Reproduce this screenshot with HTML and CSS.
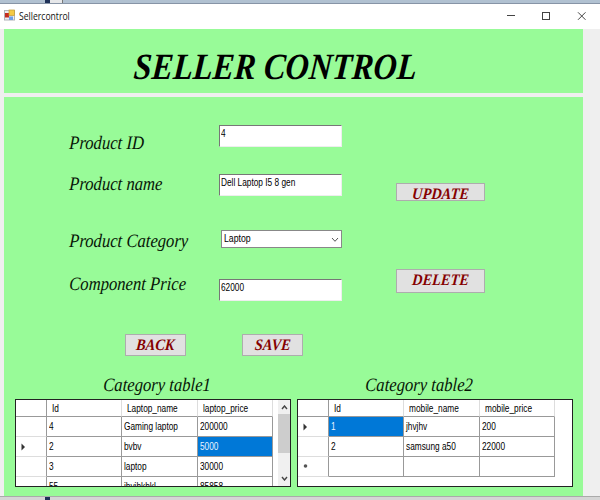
FILE: index.html
```
<!DOCTYPE html>
<html lang="en">
<head>
<meta charset="utf-8">
<title>Sellercontrol</title>
<link rel="stylesheet" href="styles.css">
</head>
<body>
<div class="backdrop-top"><i class="dark"></i><i class="light"></i></div>
<div class="window">
  <header class="titlebar">
    <svg class="app-icon" width="11" height="12" viewBox="0 0 11 12"><rect x=".5" y="1.5" width="10" height="9.5" fill="#ececf0" stroke="#b0b2b8"/><rect x="1" y="4" width="4" height="4.5" fill="#c42c20"/><rect x="5" y="1" width="5.5" height="5.5" fill="#f5c945" stroke="#c29a35" stroke-width=".7"/><rect x="5" y="7.5" width="4" height="3.5" fill="#6f9fe8"/></svg>
    <span class="caption">Sellercontrol</span>
    <svg class="controls" width="80" height="12" viewBox="0 0 80 12" fill="none" stroke="#444"><path d="M1 5.500h8"/><rect x="36.500" y="2.500" width="7" height="7"/><path d="M72 2.300l7.500 7.500M79.500 2.300l-7.500 7.500"/></svg>
  </header>
  <section class="banner"><h1>SELLER CONTROL</h1></section>
  <main class="panel">
    <div class="form">
      <div class="labels">
        <label class="lbl id">Product ID</label>
        <label class="lbl name">Product name</label>
        <label class="lbl cat">Product Category</label>
        <label class="lbl price">Component Price</label>
      </div>
      <div class="fields">
        <div class="box"><span class="s">4</span></div>
        <div class="box second"><span class="s">Dell Laptop I5 8 gen</span></div>
        <div class="combo"><span class="s">Laptop</span><svg width="8" height="6" viewBox="0 0 8 6" fill="none" stroke="#555"><path d="M1 1l3 3.300 3-3.300"/></svg></div>
        <div class="box fourth"><span class="s">62000</span></div>
      </div>
      <div class="side">
        <button class="btn update"><span>UPDATE</span></button>
        <button class="btn delete"><span>DELETE</span></button>
      </div>
    </div>
    <div class="actions">
      <button class="btn small"><span>BACK</span></button>
      <button class="btn small"><span>SAVE</span></button>
    </div>
    <div class="tables">
      <section class="block">
        <h2 class="lbl first-title">Category table1</h2>
        <div class="frame">
          <div class="grid">
            <div class="h"></div><div class="h"><span class="s">Id</span></div><div class="h"><span class="s">Laptop_name</span></div><div class="h"><span class="s">laptop_price</span></div>
            <div class="r"></div><div><span class="s">4</span></div><div><span class="s">Gaming laptop</span></div><div><span class="s">200000</span></div>
            <div class="r"><svg width="5" height="8" viewBox="0 0 5 8"><path d="M.5.500L4 4 .5 7.500z" fill="#333"/></svg></div><div><span class="s">2</span></div><div><span class="s">bvbv</span></div><div class="sel"><span class="s">5000</span></div>
            <div class="r"></div><div><span class="s">3</span></div><div><span class="s">laptop</span></div><div><span class="s">30000</span></div>
            <div class="r"></div><div><span class="s">55</span></div><div><span class="s">jhvjhkhkl</span></div><div><span class="s">85858</span></div>
          </div>
          <div class="scroll">
            <svg width="7" height="5" viewBox="0 0 7 5" fill="none" stroke="#444" stroke-width="1.400"><path d="M1 4l2.500-3L6 4"/></svg>
            <div class="thumb"></div>
            <svg class="down" width="7" height="5" viewBox="0 0 7 5" fill="none" stroke="#444" stroke-width="1.400"><path d="M1 1l2.500 3L6 1"/></svg>
          </div>
        </div>
      </section>
      <section class="block">
        <h2 class="lbl second-title">Category table2</h2>
        <div class="frame">
          <div class="grid">
            <div class="h"></div><div class="h"><span class="s">Id</span></div><div class="h"><span class="s">mobile_name</span></div><div class="h"><span class="s">mobile_price</span></div>
            <div class="r"><svg width="5" height="8" viewBox="0 0 5 8"><path d="M.5.500L4 4 .5 7.500z" fill="#333"/></svg></div><div class="sel"><span class="s">1</span></div><div><span class="s">jhvjhv</span></div><div><span class="s">200</span></div>
            <div class="r"></div><div><span class="s">2</span></div><div><span class="s">samsung a50</span></div><div><span class="s">22000</span></div>
            <div class="r"><svg class="new" width="5" height="6" viewBox="0 0 5 6"><circle cx="2.500" cy="3" r="1.800" fill="#555"/></svg></div><div></div><div></div><div></div>
          </div>
        </div>
      </section>
    </div>
  </main>
</div>
<div class="backdrop-bottom"><i></i></div>
</body>
</html>
```
FILE: styles.css
```
* { box-sizing: border-box; }
body {
  margin: 0;
  width: 600px;
  height: 500px;
  overflow: hidden;
  background: #efefef;
  font-family: "Liberation Sans", sans-serif;
}
.backdrop-top {
  display: flex;
  height: 4px;
  padding-left: 45px;
  background: #b1c1d1;
  border-bottom: 1px solid #8794a6;
}
.backdrop-top .dark { width: 5px; background: #1f3158; }
.backdrop-top .light { width: 13px; background: #e6e7e9; border-right: 1px solid #777; }
.window { height: 492px; }
.titlebar {
  display: flex;
  height: 25px;
  padding: 5px 14px 0 4px;
  background: #fff;
}
.caption {
  margin-left: 4px;
  font: 10.5px/14px "Open Sans", sans-serif;
  color: #111;
  white-space: nowrap;
  transform: scaleX(.82);
  transform-origin: 0 0;
}
.controls { margin: 1px 0 0 auto; }
.app-icon { flex: none; }
.banner {
  width: 579px;
  height: 64px;
  margin: 0 0 4px 4px;
  padding: 17px 0 0 129px;
  background: #98fb98;
}
h1 {
  margin: 0;
  font: italic bold 37px/41px "Liberation Serif", serif;
  white-space: nowrap;
  transform: scaleX(.874) skewX(-5deg);
  transform-origin: 0 80%;
}
.panel {
  width: 579px;
  height: 399px;
  margin-left: 4px;
  background: #98fb98;
}
.form { display: flex; height: 237px; padding-left: 65px; }
.labels { width: 150px; padding-top: 35px; }
.lbl {
  display: block;
  margin: 0;
  height: 22px;
  font: italic 19px/22px "Liberation Serif", serif;
  color: #061506;
  white-space: nowrap;
  transform: scaleX(.875) skewX(-3deg);
  transform-origin: 0 80%;
}
.lbl.name { margin-top: 19px; }
.lbl.cat { margin-top: 35px; }
.lbl.price { margin-top: 21px; }
.fields { width: 123px; padding-top: 28px; }
.s {
  display: inline-block;
  font: 10.5px/12px "Liberation Sans", sans-serif;
  white-space: nowrap;
  transform: scaleX(.79);
  transform-origin: 0 0;
}
.box {
  height: 22px;
  padding: 0 0 0 1px;
  background: #fff;
  border: 1px solid #eee;
  border-top: 1px solid #777;
  border-left: 1px solid #777;
  line-height: 12px;
}
.box.second { margin-top: 27px; }
.box.fourth { margin-top: 31px; }
.combo {
  display: flex;
  justify-content: space-between;
  height: 18px;
  margin: 34px 0 0 2px;
  padding: 1px 2px 0;
  background: #fff;
  border: 1px solid #888;
}
.combo .s { transform: scaleX(.83); }
.combo svg { margin-top: 5px; }
.side { width: 89px; margin-left: 54px; padding-top: 86px; }
.btn {
  display: flex;
  justify-content: center;
  width: 89px;
  padding: 0;
  background: #e1e1e1;
  border: 1px solid #adadad;
  color: #850000;
  font: italic bold 16px/18px "Liberation Serif", serif;
  align-items: flex-start;
}
.btn span { transform: scaleX(.9) skewX(-5deg); }
.btn.update { height: 18px; padding-top: 1px; }
.btn.delete { height: 24px; margin-top: 68px; padding-top: 1px; }
.actions { display: flex; gap: 56px; height: 43px; padding-left: 121px; }
.btn.small { width: 61px; height: 22px; padding-top: 1px; }
.tables { display: flex; gap: 6px; padding: 0 0 0 11px; height: 109px; margin-top: -3px; }
.block { width: 276px; }
.first-title { margin-left: 88px; }
.second-title { margin-left: 68px; }
.frame {
  display: flex;
  height: 88px;
  margin-top: 3px;
  background: #fff;
  border: 1px solid #222;
  overflow: hidden;
}
.grid {
  display: grid;
  grid-template-columns: 31px 75px 76px 75px;
  grid-template-rows: 17px;
  grid-auto-rows: 20px;
  align-content: start;
  font-size: 10px;
}
.grid > div {
  padding: 3px 0 0 2px;
  line-height: 12px;
  border-right: 1px solid #999;
  border-bottom: 1px solid #999;
}
.grid > .h { padding: 2px 0 0 5px; border-right-color: #ddd; }
.grid > .r { padding: 5px 0 0 5px; border-bottom-color: #ddd; }
.grid > .h:first-child { border-right-color: #999; }
.grid svg { display: block; margin-top: 1px; }
.grid > .sel { background: #0078d7; color: #e8f4ff; }
.scroll {
  display: flex;
  flex-direction: column;
  align-items: center;
  width: 12px;
  margin-left: 5px;
  padding: 5px 0;
  background: #f0f0f0;
}
.thumb { width: 12px; height: 39px; margin-top: 4px; background: #cdcdcd; }
.scroll .down { margin-top: auto; }
.backdrop-bottom {
  height: 4px;
  padding-left: 45px;
  background: #d5d5d5;
  border-top: 1px solid #aaa;
}
.backdrop-bottom i { display: block; width: 5px; height: 3px; background: #1f3158; }
```
